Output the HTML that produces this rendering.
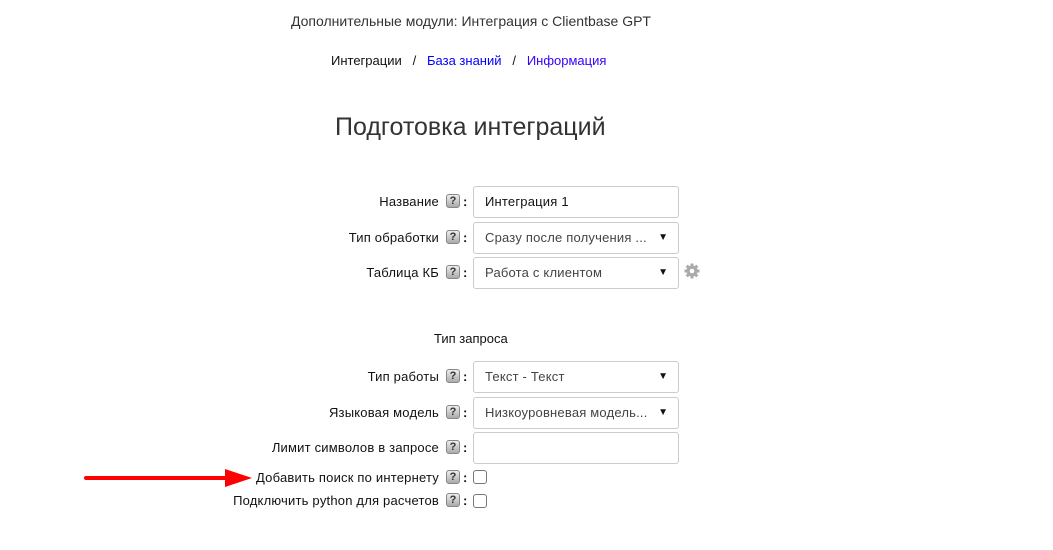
<!DOCTYPE html>
<html><head><meta charset="utf-8"><style>
body{margin:0;width:1053px;height:550px;background:#fff;font-family:"Liberation Sans","DejaVu Sans",sans-serif;position:relative;overflow:hidden;color:#111}
.a{position:absolute;white-space:nowrap}
.lbl{position:absolute;right:614px;font-size:13px;line-height:16px;color:#111;letter-spacing:0.2px}
.q{position:absolute;left:446px;width:12px;height:12px;border:1px solid #888;border-radius:3px;background:linear-gradient(#eee,#aaa);font:bold 11px/12px "Liberation Sans",sans-serif;text-align:center;color:#333}
.c{position:absolute;left:463px;font-size:13px;font-weight:bold;line-height:16px}
.in{position:absolute;left:473px;width:204px;height:30px;border:1px solid #ccc;border-radius:3px;box-sizing:content-box;font-size:13px;line-height:30px;padding:0;background:#fff}
.in span{position:absolute;left:11px;color:#444;letter-spacing:0.2px}
.in i{position:absolute;right:10px;top:0;font-style:normal;font-size:10px;color:#111}
.cb{position:absolute;left:473px;width:12px;height:12px;border:1px solid #777;border-radius:3px;background:#fff}
</style></head><body>
<div class="a" style="left:0;width:942px;text-align:center;top:13px;font-size:14px;color:#333">Дополнительные модули: Интеграция с Clientbase GPT</div>
<div class="a" style="left:331px;top:53px;font-size:13px;color:#111">Интеграции &nbsp;&nbsp;/&nbsp;&nbsp; <span style="color:#00f">База знаний</span> &nbsp;&nbsp;/&nbsp;&nbsp; <span style="color:#30f">Информация</span></div>
<div class="a" style="left:335px;top:113px;font-size:25px;color:#333">Подготовка интеграций</div>

<div class="lbl" style="top:194px">Название</div><div class="q" style="top:194px">?</div><div class="c" style="top:194px">:</div>
<div class="in" style="top:186px"><span style="color:#111">Интеграция 1</span></div>

<div class="lbl" style="top:230px">Тип обработки</div><div class="q" style="top:230px">?</div><div class="c" style="top:230px">:</div>
<div class="in" style="top:222px"><span>Сразу после получения ...</span><i>▼</i></div>

<div class="lbl" style="top:265px">Таблица КБ</div><div class="q" style="top:265px">?</div><div class="c" style="top:265px">:</div>
<div class="in" style="top:257px"><span>Работа с клиентом</span><i>▼</i></div>
<svg class="a" style="left:683px;top:262px" width="18" height="18" viewBox="0 0 18 18"><g fill="#aaa"><circle cx="9" cy="9" r="5.5"/><rect x="7.5" y="1.5" width="3" height="15"/><rect x="1.5" y="7.5" width="15" height="3"/><rect x="7.5" y="1.5" width="3" height="15" transform="rotate(45 9 9)"/><rect x="7.5" y="1.5" width="3" height="15" transform="rotate(-45 9 9)"/></g><circle cx="9" cy="9" r="2.3" fill="#fff"/></svg>

<div class="a" style="left:434px;top:331px;font-size:13px">Тип запроса</div>

<div class="lbl" style="top:369px">Тип работы</div><div class="q" style="top:369px">?</div><div class="c" style="top:369px">:</div>
<div class="in" style="top:361px"><span>Текст - Текст</span><i>▼</i></div>

<div class="lbl" style="top:405px">Языковая модель</div><div class="q" style="top:405px">?</div><div class="c" style="top:405px">:</div>
<div class="in" style="top:397px"><span>Низкоуровневая модель...</span><i>▼</i></div>

<div class="lbl" style="top:440px">Лимит символов в запросе</div><div class="q" style="top:440px">?</div><div class="c" style="top:440px">:</div>
<div class="in" style="top:432px"></div>

<div class="lbl" style="top:470px">Добавить поиск по интернету</div><div class="q" style="top:470px">?</div><div class="c" style="top:470px">:</div>
<div class="cb" style="top:470px"></div>

<div class="lbl" style="top:493px">Подключить python для расчетов</div><div class="q" style="top:493px">?</div><div class="c" style="top:493px">:</div>
<div class="cb" style="top:494px"></div>

<svg class="a" style="left:80px;top:466px" width="180" height="24"><line x1="6" y1="12" x2="150" y2="12" stroke="#f00" stroke-width="4" stroke-linecap="round"/><polygon points="145,3 172,12 145,21" fill="#f00"/></svg>
</body></html>
